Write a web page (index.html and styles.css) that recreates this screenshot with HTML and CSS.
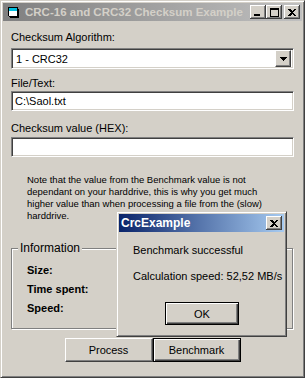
FILE: index.html
```html
<!DOCTYPE html>
<html lang="en">
<head>
  <meta charset="UTF-8" />
  <title>CRC-16 and CRC32 Checksum Example</title>
  <link rel="stylesheet" href="styles.css">
</head>
<body>
  <div class="window">
    <!-- Main window caption (inactive) -->
    <div class="titlebar inactive">
      <svg class="app-icon" width="16" height="16" viewBox="0 0 16 16" shape-rendering="crispEdges">
        <path d="M2 3h9l1 1v9H3l-1-1z" fill="#000"/>
        <rect x="3" y="4" width="8" height="8" fill="#fff"/>
        <rect x="3" y="4" width="8" height="3" fill="#00c0e0"/>
        <rect x="11" y="5" width="2" height="8" fill="#000"/>
        <rect x="4" y="13" width="9" height="1" fill="#000"/>
      </svg>
      <span class="title">CRC-16 and CRC32 Checksum Example</span>
      <div class="caption-buttons">
        <span class="cap-btn">
          <svg width="8" height="7" viewBox="0 0 8 7" shape-rendering="crispEdges"><rect x="0" y="5" width="6" height="2" fill="#000"/></svg>
        </span>
        <span class="cap-btn">
          <svg width="9" height="9" viewBox="0 0 9 9" shape-rendering="crispEdges"><path d="M0 0h9v9H0zM1 2v6h7V2z" fill="#000" fill-rule="evenodd"/></svg>
        </span>
        <span class="cap-btn close">
          <svg width="8" height="7" viewBox="0 0 8 7" shape-rendering="crispEdges"><path d="M0 0h2l2 2 2-2h2L5 3.5 8 7H6L4 5 2 7H0l3-3.5z" fill="#000"/></svg>
        </span>
      </div>
    </div>

    <div class="client">
      <div class="field-label first">Checksum Algorithm:</div>
      <div class="combo sunken">
        <span class="combo-text">1 - CRC32</span>
        <span class="combo-btn raised">
          <svg width="7" height="4" viewBox="0 0 7 4" shape-rendering="crispEdges"><path d="M0 0h7L3.5 4z" fill="#000"/></svg>
        </span>
      </div>

      <div class="field-label second">File/Text:</div>
      <div class="edit sunken">C:\Saol.txt</div>

      <div class="field-label third">Checksum value (HEX):</div>
      <div class="edit sunken"></div>

      <p class="note">
        Note that the value from the Benchmark value is not<br>
        dependant on your harddrive, this is why you get much<br>
        higher value than when processing a file from the (slow)<br>
        harddrive.
      </p>

      <fieldset class="group">
        <legend>Information</legend>
        <div class="info-row">Size:</div>
        <div class="info-row">Time spent:</div>
        <div class="info-row">Speed:</div>
      </fieldset>

      <div class="buttons">
        <button class="btn raised">Process</button>
        <button class="btn raised default">Benchmark</button>
      </div>
    </div>

    <!-- Message box on top of the main window -->
    <div class="dialog">
      <div class="titlebar active">
        <span class="title">CrcExample</span>
        <span class="cap-btn close">
          <svg width="8" height="7" viewBox="0 0 8 7" shape-rendering="crispEdges"><path d="M0 0h2l2 2 2-2h2L5 3.5 8 7H6L4 5 2 7H0l3-3.5z" fill="#000"/></svg>
        </span>
      </div>
      <div class="dialog-body">
        <div class="msg">Benchmark successful</div>
        <div class="msg">Calculation speed: 52,52 MB/s</div>
        <button class="btn raised default ok">OK</button>
      </div>
    </div>
  </div>
</body>
</html>
```

FILE: styles.css
```css
* {
  box-sizing: border-box;
  margin: 0;
  padding: 0;
}

body {
  background: #d4d0c8;
  font-family: 'Liberation Sans', Arial, sans-serif;
  font-size: 11px;
  color: #000;
}

/* 3D borders */
.raised {
  border: 1px solid;
  border-color: #fff #404040 #404040 #fff;
  box-shadow: inset -1px -1px #808080, inset 1px 1px #d4d0c8;
  background: #d4d0c8;
}

.sunken {
  border: 1px solid;
  border-color: #808080 #fff #fff #808080;
  box-shadow: inset 1px 1px #404040, inset -1px -1px #d4d0c8;
  background: #fff;
}

/* Window frame */
.window {
  position: relative;
  width: 305px;
  height: 378px;
  padding: 2px;
  background: #d4d0c8;
  border: 1px solid;
  border-color: #d4d0c8 #404040 #404040 #d4d0c8;
  box-shadow: inset 1px 1px #fff, inset -1px -1px #808080;
  display: flex;
  flex-direction: column;
}

.titlebar {
  height: 18px;
  display: flex;
  align-items: center;
  padding: 0 2px 0 3px;
}

.titlebar.inactive {
  background: linear-gradient(to right, #808080, #c0c0c0);
  color: #d4d0c8;
}

.titlebar.active {
  background: linear-gradient(to right, #0a246a, #a6caf0);
  color: #fff;
}

.titlebar .title {
  font-weight: 700;
  font-size: 11.5px;
  white-space: nowrap;
  flex: 1;
}

.app-icon {
  margin-right: 3px;
}

.caption-buttons {
  display: flex;
}

.cap-btn {
  width: 16px;
  height: 14px;
  display: flex;
  align-items: center;
  justify-content: center;
  background: #d4d0c8;
  box-shadow: inset -1px -1px #404040, inset 1px 1px #fff, inset -2px -2px #808080;
}

.cap-btn.close {
  margin-left: 2px;
}

/* Client area */
.client {
  flex: 1;
  display: flex;
  flex-direction: column;
  padding: 0 8px;
}

.field-label {
  line-height: 13px;
}

.field-label.first {
  margin-top: 10px;
  margin-bottom: 4px;
}

.field-label.second {
  margin-top: 8px;
  margin-bottom: 1px;
}

.field-label.third {
  margin-top: 11px;
  margin-bottom: 2px;
}

.combo {
  height: 21px;
  display: flex;
  align-items: center;
  padding: 2px;
}

.combo-text {
  flex: 1;
  padding-left: 2px;
}

.combo-btn {
  width: 16px;
  height: 17px;
  display: flex;
  align-items: center;
  justify-content: center;
}

.edit {
  height: 20px;
  line-height: 16px;
  padding: 1px 3px;
}

.note {
  margin: 17px 0 0 16px;
  font-size: 9.5px;
  line-height: 12px;
}

/* Information group box */
.group {
  margin: 20px 1px 0 0;
  height: 87px;
  padding: 0 6px;
  border: 1px solid #808080;
  box-shadow: inset 1px 1px #fff, 1px 1px #fff;
}

.group legend {
  padding: 0 2px;
  font-size: 12px;
  line-height: 13px;
  background: #d4d0c8;
}

.info-row {
  margin-left: 9px;
  font-weight: 700;
  line-height: 19px;
}

.info-row:first-of-type {
  margin-top: 6px;
}

.buttons {
  display: flex;
  justify-content: center;
  margin-top: 9px;
}

.btn {
  width: 88px;
  height: 24px;
  font-family: inherit;
  font-size: 11px;
  color: #000;
}

.btn.default {
  border: 1px solid #000;
  box-shadow: inset 1px 1px #fff, inset -1px -1px #404040, inset -2px -2px #808080;
}

/* Message box */
.dialog {
  position: absolute;
  left: 115px;
  top: 210px;
  width: 171px;
  height: 126px;
  padding: 2px;
  background: #d4d0c8;
  border: 1px solid;
  border-color: #d4d0c8 #404040 #404040 #d4d0c8;
  box-shadow: inset 1px 1px #fff, inset -1px -1px #808080;
  display: flex;
  flex-direction: column;
}

.dialog .titlebar {
  padding: 0 2px 0 2px;
}

.dialog .titlebar .title {
  font-size: 12px;
}

.dialog-body {
  flex: 1;
  display: flex;
  flex-direction: column;
  padding: 12px 0 0 14px;
}

.msg {
  line-height: 13px;
  margin-bottom: 13px;
}

.ok {
  width: 74px;
  height: 23px;
  margin: 6px 0 0 32px;
}
```
